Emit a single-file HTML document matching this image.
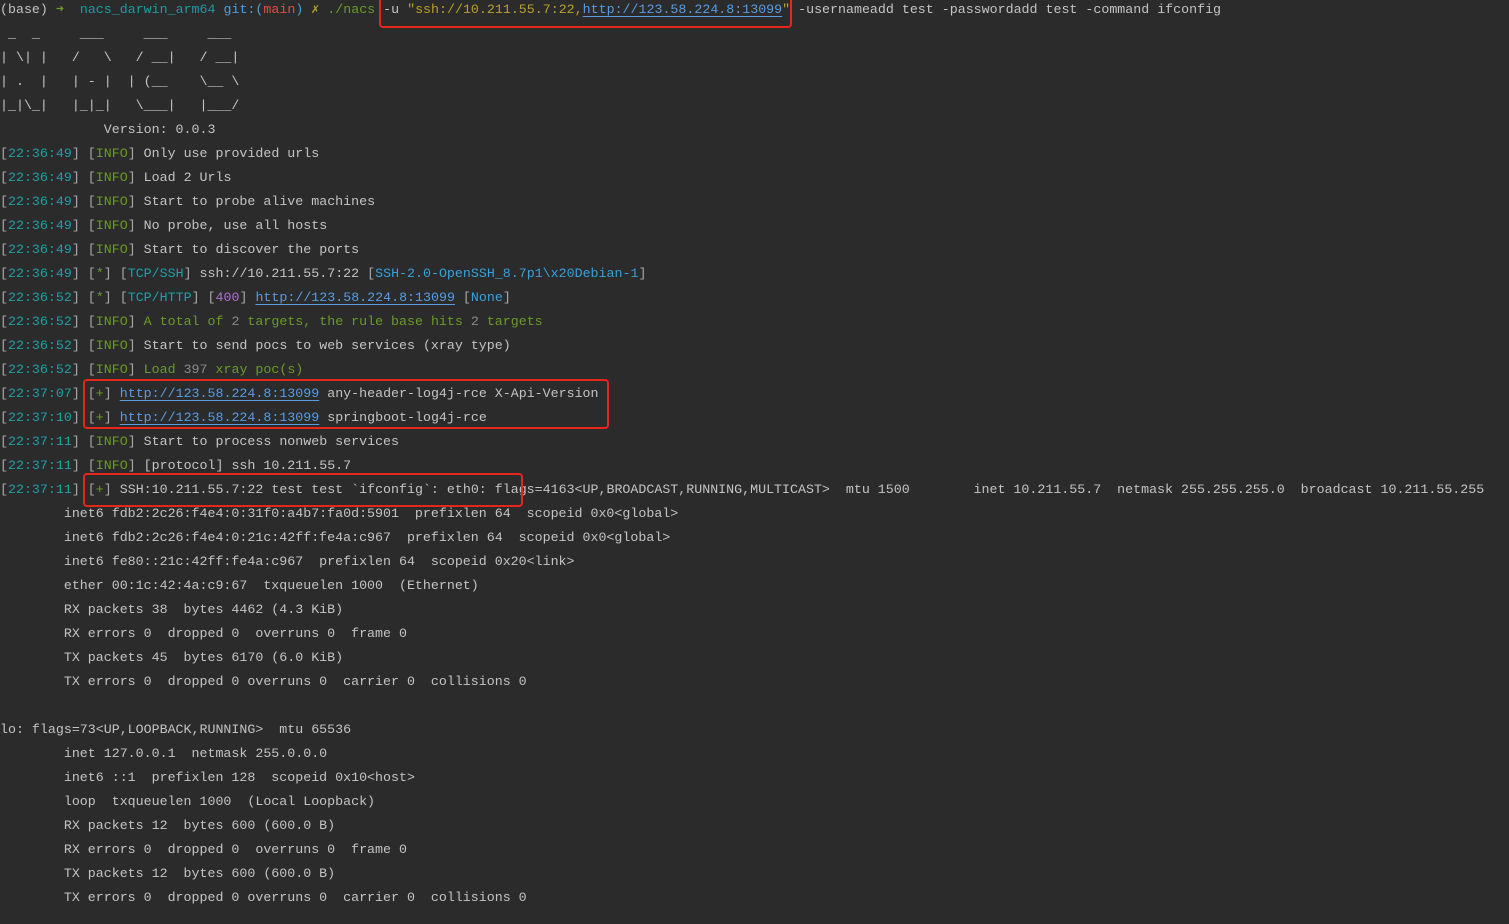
<!DOCTYPE html>
<html><head><meta charset="utf-8"><style>
html,body{margin:0;padding:0;background:#2b2b2b;width:1509px;height:924px;overflow:hidden}
pre{margin:-2px 0 0 0;font-family:"Liberation Mono","DejaVu Sans Mono",monospace;font-size:13.3px;line-height:24px;color:#c4c4c4;white-space:pre}
.t{color:#1f9fa6}.b{color:#a9a9a9}.g{color:#6a9a2a}.y{color:#b8a02a}.u{color:#5a9be0;text-decoration:underline;text-underline-offset:3px}
.c{color:#1e9aa0}.r{color:#e24b4b}.bl{color:#4a9ee0}.p{color:#b070d0}.d{color:#8a8a8a}.cy{color:#3aa0d8}
.box{position:absolute;border:2px solid #e5261d;border-radius:4px}
</style></head><body>
<pre>(base) <span class="g">➜</span>  <span class="c">nacs_darwin_arm64</span> <span class="bl">git:(</span><span class="r">main</span><span class="bl">)</span> <span class="y">✗</span> <span class="g">./nacs</span> -u <span class="y">"ssh://10.211.55.7:22,</span><span class="u">http://123.58.224.8:13099</span><span class="y">"</span> -usernameadd test -passwordadd test -command ifconfig
 _  _     ___     ___     ___
| \| |   /   \   / __|   / __|
| .  |   | - |  | (__    \__ \
|_|\_|   |_|_|   \___|   |___/
             Version: 0.0.3
<span class="b">[</span><span class="t">22:36:49</span><span class="b">]</span> <span class="b">[</span><span class="g">INFO</span><span class="b">]</span> Only use provided urls
<span class="b">[</span><span class="t">22:36:49</span><span class="b">]</span> <span class="b">[</span><span class="g">INFO</span><span class="b">]</span> Load 2 Urls
<span class="b">[</span><span class="t">22:36:49</span><span class="b">]</span> <span class="b">[</span><span class="g">INFO</span><span class="b">]</span> Start to probe alive machines
<span class="b">[</span><span class="t">22:36:49</span><span class="b">]</span> <span class="b">[</span><span class="g">INFO</span><span class="b">]</span> No probe, use all hosts
<span class="b">[</span><span class="t">22:36:49</span><span class="b">]</span> <span class="b">[</span><span class="g">INFO</span><span class="b">]</span> Start to discover the ports
<span class="b">[</span><span class="t">22:36:49</span><span class="b">]</span> <span class="b">[</span><span class="g">*</span><span class="b">]</span> <span class="b">[</span><span class="t">TCP/SSH</span><span class="b">]</span> ssh://10.211.55.7:22 <span class="b">[</span><span class="cy">SSH-2.0-OpenSSH_8.7p1\x20Debian-1</span><span class="b">]</span>
<span class="b">[</span><span class="t">22:36:52</span><span class="b">]</span> <span class="b">[</span><span class="g">*</span><span class="b">]</span> <span class="b">[</span><span class="t">TCP/HTTP</span><span class="b">]</span> <span class="b">[</span><span class="p">400</span><span class="b">]</span> <span class="u">http://123.58.224.8:13099</span> <span class="b">[</span><span class="cy">None</span><span class="b">]</span>
<span class="b">[</span><span class="t">22:36:52</span><span class="b">]</span> <span class="b">[</span><span class="g">INFO</span><span class="b">]</span> <span class="g">A total of </span><span class="d">2</span><span class="g"> targets, the rule base hits </span><span class="d">2</span><span class="g"> targets</span>
<span class="b">[</span><span class="t">22:36:52</span><span class="b">]</span> <span class="b">[</span><span class="g">INFO</span><span class="b">]</span> Start to send pocs to web services (xray type)
<span class="b">[</span><span class="t">22:36:52</span><span class="b">]</span> <span class="b">[</span><span class="g">INFO</span><span class="b">]</span> <span class="g">Load </span><span class="d">397</span><span class="g"> xray poc(s)</span>
<span class="b">[</span><span class="t">22:37:07</span><span class="b">]</span> <span class="b">[</span><span class="g">+</span><span class="b">]</span> <span class="u">http://123.58.224.8:13099</span> any-header-log4j-rce X-Api-Version
<span class="b">[</span><span class="t">22:37:10</span><span class="b">]</span> <span class="b">[</span><span class="g">+</span><span class="b">]</span> <span class="u">http://123.58.224.8:13099</span> springboot-log4j-rce
<span class="b">[</span><span class="t">22:37:11</span><span class="b">]</span> <span class="b">[</span><span class="g">INFO</span><span class="b">]</span> Start to process nonweb services
<span class="b">[</span><span class="t">22:37:11</span><span class="b">]</span> <span class="b">[</span><span class="g">INFO</span><span class="b">]</span> [protocol] ssh 10.211.55.7
<span class="b">[</span><span class="t">22:37:11</span><span class="b">]</span> <span class="b">[</span><span class="g">+</span><span class="b">]</span> SSH:10.211.55.7:22 test test `ifconfig`: eth0: flags=4163&lt;UP,BROADCAST,RUNNING,MULTICAST&gt;  mtu 1500        inet 10.211.55.7  netmask 255.255.255.0  broadcast 10.211.55.255
        inet6 fdb2:2c26:f4e4:0:31f0:a4b7:fa0d:5901  prefixlen 64  scopeid 0x0&lt;global&gt;
        inet6 fdb2:2c26:f4e4:0:21c:42ff:fe4a:c967  prefixlen 64  scopeid 0x0&lt;global&gt;
        inet6 fe80::21c:42ff:fe4a:c967  prefixlen 64  scopeid 0x20&lt;link&gt;
        ether 00:1c:42:4a:c9:67  txqueuelen 1000  (Ethernet)
        RX packets 38  bytes 4462 (4.3 KiB)
        RX errors 0  dropped 0  overruns 0  frame 0
        TX packets 45  bytes 6170 (6.0 KiB)
        TX errors 0  dropped 0 overruns 0  carrier 0  collisions 0

lo: flags=73&lt;UP,LOOPBACK,RUNNING&gt;  mtu 65536
        inet 127.0.0.1  netmask 255.0.0.0
        inet6 ::1  prefixlen 128  scopeid 0x10&lt;host&gt;
        loop  txqueuelen 1000  (Local Loopback)
        RX packets 12  bytes 600 (600.0 B)
        RX errors 0  dropped 0  overruns 0  frame 0
        TX packets 12  bytes 600 (600.0 B)
        TX errors 0  dropped 0 overruns 0  carrier 0  collisions 0
</pre>
<div class="box" style="left:379px;top:-4px;width:409px;height:28px"></div>
<div class="box" style="left:83px;top:379px;width:522px;height:46px"></div>
<div class="box" style="left:83px;top:473px;width:436px;height:30px"></div>
</body></html>
